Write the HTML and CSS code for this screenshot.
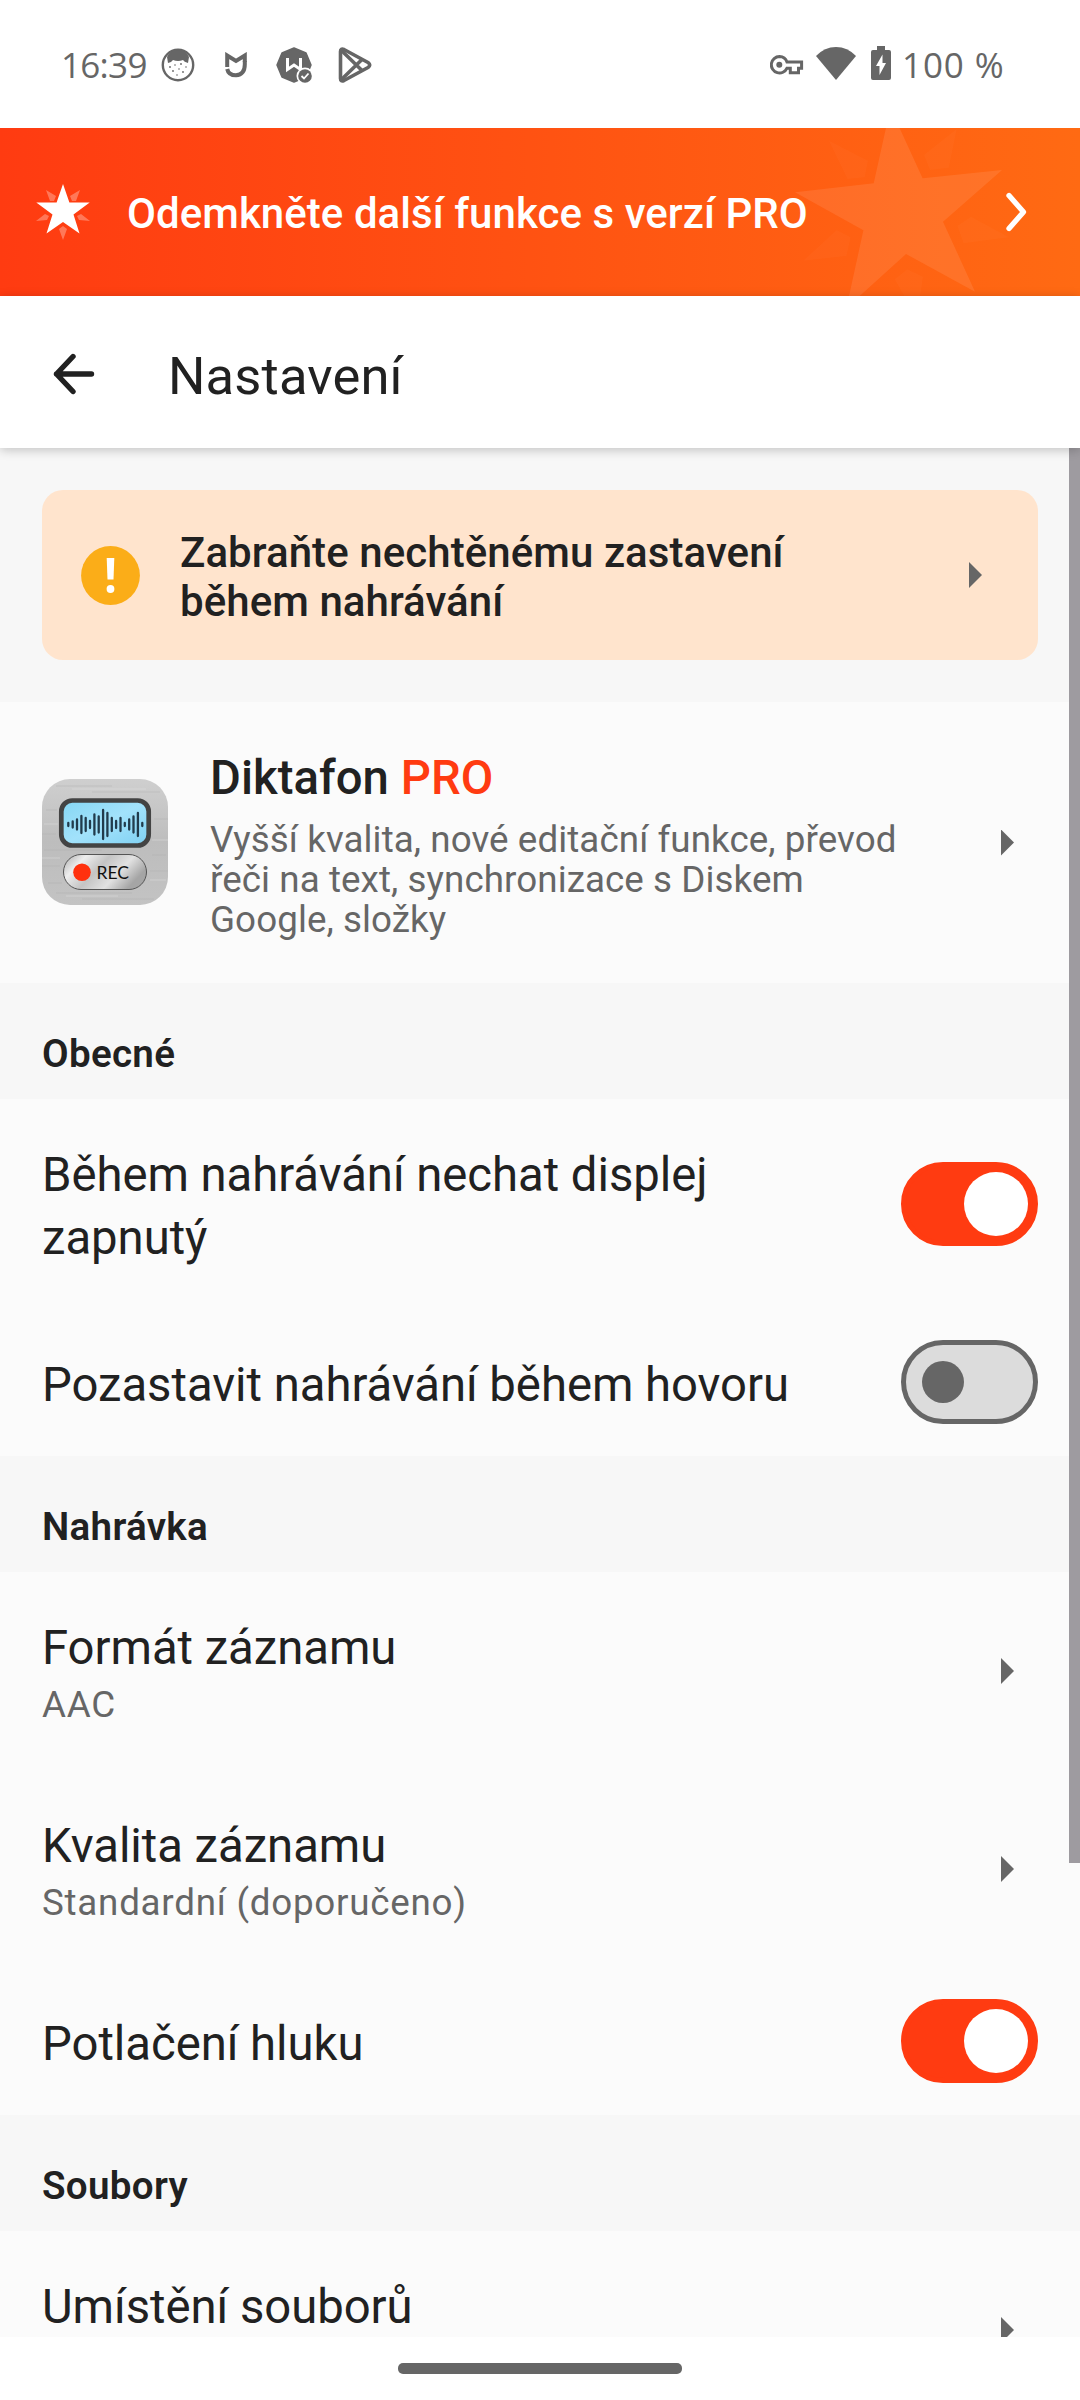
FILE: index.html
```html
<!DOCTYPE html>
<html lang="cs">
<head>
<meta charset="utf-8">
<title>Nastavení</title>
<link rel="stylesheet" href="styles.css">
</head>
<body>
<div class="screen">
  <header class="status">
    <span class="clock">16:39</span>
    <svg class="cat" width="34" height="34" viewBox="0 0 34 34"><circle cx="17" cy="17" r="15.2" fill="none" stroke="#666" stroke-width="2.4"/><path d="M6 9Q9 2 17 2T28 9L27 15Q23 14 22 12Q17 14 12 12Q10 15 7 15Z" fill="#666"/><g fill="#666"><circle cx="9" cy="19" r=".9"/><circle cx="14" cy="17" r=".8"/><circle cx="20" cy="16" r=".9"/><circle cx="25" cy="19" r=".8"/><circle cx="12" cy="23" r=".9"/><circle cx="18" cy="21" r=".8"/><circle cx="22" cy="24" r=".9"/><circle cx="16" cy="27" r=".8"/></g></svg>
    <svg class="mi" width="22" height="26" viewBox="0 0 22 26"><path d="M2.200 15V3.500L11 9L19.800 3.500V10" fill="none" stroke="#666" stroke-width="4"/><path d="M2.200 17Q3.500 23.300 11 23.300Q19.800 22.500 19.800 12.500V9" fill="none" stroke="#666" stroke-width="4"/></svg>
    <svg class="octagon" width="36" height="36" viewBox="0 0 36 36"><path d="M18 1L30 6L35 18L30 30L18 35L6 30L1 18L6 6Z" fill="#666" stroke="#666" stroke-width="1.500" stroke-linejoin="round"/><path d="M11.500 11V22.500L18 18L24.500 22.500V11" fill="none" stroke="#fff" stroke-width="3"/><circle cx="29" cy="29" r="8.500" fill="#fff"/><circle cx="29" cy="29" r="6.800" fill="#666"/><path d="M25.500 29L28 31.500L32.500 26.500" fill="none" stroke="#fff" stroke-width="1.800"/></svg>
    <svg class="play" width="34" height="36" viewBox="0 0 34 36"><g fill="none" stroke="#666" stroke-width="3.600" stroke-linejoin="round"><path d="M2.500 4.500Q2.500 1 6 2.500L30 15.500Q33.500 18 30 20.500L6 33.500Q2.500 35 2.500 31.500Z"/><path d="M4 4L24.500 24M4 32L24.500 12"/></g></svg>
    <svg class="key" width="34" height="20" viewBox="0 0 34 20"><path d="M9.500 1.600A8.200 8.200 0 1 0 17 13.200H20.300V17.800H28.500V13.200H31.600V7H17A8.200 8.200 0 0 0 9.500 1.600Z" fill="none" stroke="#666" stroke-width="3"/><circle cx="9.300" cy="9.800" r="3" fill="#666"/></svg>
    <svg class="wifi" width="40" height="33" viewBox="0 0 40 33"><path d="M0 9Q8.500 0 20 0T40 9L20 33Z" fill="#666"/></svg>
    <svg class="battery" width="20" height="34" viewBox="0 0 20 34"><path d="M6 0H14V4H18Q20 4 20 6V32Q20 34 18 34H2Q0 34 0 32V6Q0 4 2 4H6Z" fill="#666"/><path d="M11.500 8.500V17H15L8.500 29V20H5Z" fill="#fff"/></svg>
    <span class="percent">100 %</span>
  </header>

  <a class="promo">
    <svg class="promo-bg" width="240" height="168" viewBox="790 128 240 168"><path fill="#fff" fill-opacity=".09" d="M890.400 108L922.600 178.300L1002 170L943 221.700L975 291.700L906 254L846.400 308L863.400 230.300L795 192.300L873.700 183.300Z"/><path fill="#fff" fill-opacity=".025" d="M829 140.700L868 160.700L864.700 177.300L847.500 179ZM956.700 129L924 155L930 170L948.800 167.700ZM957.400 226L971 216.700L1009 237.300L963.600 243.300ZM803.400 260.700L836.800 230L850.600 237.300L846.500 256ZM894.700 279.300L907.400 269.300L923 276.700L917 318Z"/></svg>
    <svg class="promo-star" width="54" height="56" viewBox="0 0 54 56"><path fill="#fff" fill-opacity=".3" d="M10 6L20 12L18 17H14ZM44 6L34 12L36 17H40ZM0 37L9 30L13 32L11 36ZM54 37L45 30L41 32L43 36ZM27 56L23 45L27 42L31 45Z"/><path fill="#fff" d="M27 0L33.400 18.500H53.700L37.500 30.500L43.500 49.500L27 38L10.500 49.500L16.500 30.500L.3 18.500H20.600Z"/></svg>
    <span class="promo-text">Odemkněte další funkce s verzí PRO</span>
    <svg class="chevron" width="22" height="40" viewBox="0 0 22 40"><path d="M4 3.500L18.500 20L4 36.500" fill="none" stroke="#fff" stroke-width="5.300" stroke-linecap="round" stroke-linejoin="round"/></svg>
  </a>

  <div class="appbar">
    <svg width="42" height="42" viewBox="0 0 42 42"><path d="M38.500 21H3.500M20 3.500L3.500 21L20 38.500" fill="none" stroke="#212121" stroke-width="5.400" stroke-linecap="round" stroke-linejoin="round"/></svg>
    <h1>Nastavení</h1>
  </div>

  <main class="list">
    <div class="scrollbar"></div>
    <div class="card">
      <svg width="59" height="59" viewBox="0 0 59 59"><circle cx="29.500" cy="29.500" r="29.400" fill="#fbad18"/><path d="M25.700 12H33.300L32.500 33.500H26.500Z" fill="#fff"/><circle cx="29.500" cy="43" r="3.900" fill="#fff"/></svg>
      <p>Zabraňte nechtěnému zastavení<br>během nahrávání</p>
      <i class="arrow"></i>
    </div>

    <section class="group product">
      <svg class="app-icon" width="126" height="126" viewBox="0 0 126 126">
        <defs>
          <linearGradient id="metal" x2="0" y2="1"><stop offset="0" stop-color="#cfcfcf"/><stop offset=".5" stop-color="#bdbdbd"/><stop offset="1" stop-color="#c3c3c3"/></linearGradient>
          <linearGradient id="lcd" x2="1" y2="1"><stop offset="0" stop-color="#85d6f3"/><stop offset=".5" stop-color="#a2e2fb"/><stop offset="1" stop-color="#7fd0f2"/></linearGradient>
          <linearGradient id="key" x2="1" y2=".4"><stop offset="0" stop-color="#aaa"/><stop offset=".25" stop-color="#eee"/><stop offset=".5" stop-color="#c4c4c4"/><stop offset=".75" stop-color="#e2e2e2"/><stop offset="1" stop-color="#a5a5a5"/></linearGradient>
        </defs>
        <rect width="126" height="126" rx="28" fill="url(#metal)"/>
        <path d="M14 7H70M50 13H118M4 31H15M112 40H126M0 55H14M2 71H60M0 87H18M108 92H126M6 104H20M14 114H90M40 120H112M110 76H124" stroke="#aaa" stroke-opacity=".35"/>
        <path d="M30 10H104M2 45H16M110 61H126M0 79H18M108 101H124M24 117H76" stroke="#e2e2e2" stroke-opacity=".5"/>
        <rect x="19.300" y="21.500" width="87.400" height="45" rx="11" fill="url(#lcd)" stroke="#434343" stroke-width="4.700"/>
        <path d="M26.300 44v3M30.700 42.500v6M35 40.500v10M39.400 37v17M43.700 39v13M48 42v7M52.400 35.500v20M56.700 37.500v16M61.100 31v29M65.400 34v23M69.800 39v13M74.100 42v7M78.500 39v13M82.800 44v3M87.200 40.500v10M91.500 37.500v16M95.900 34v23M100.300 44v3" stroke="#213b4c" stroke-width="2.300" stroke-linecap="round"/>
        <rect x="21.500" y="75.500" width="83" height="35" rx="17.500" fill="url(#key)" stroke="#555"/>
        <circle cx="40" cy="93.300" r="8.800" fill="#ff310e"/>
        <text class="rec" x="54.500" y="99.700">REC</text>
      </svg>
      <div class="product-text">
        <h2>Diktafon <b>PRO</b></h2>
        <p>Vyšší kvalita, nové editační funkce, převod<br>řeči na text, synchronizace s Diskem<br>Google, složky</p>
      </div>
      <i class="arrow"></i>
    </section>

    <h3>Obecné</h3>
    <section class="group">
      <div class="row"><span class="label">Během nahrávání nechat displej<br>zapnutý</span><i class="switch on"></i></div>
      <div class="row"><span class="label">Pozastavit nahrávání během hovoru</span><i class="switch"></i></div>
    </section>

    <h3>Nahrávka</h3>
    <section class="group">
      <div class="row tall"><div><div class="label">Formát záznamu</div><div class="value">AAC</div></div><i class="arrow"></i></div>
      <div class="row tall"><div><div class="label">Kvalita záznamu</div><div class="value">Standardní (doporučeno)</div></div><i class="arrow"></i></div>
      <div class="row"><span class="label">Potlačení hluku</span><i class="switch on"></i></div>
    </section>

    <h3>Soubory</h3>
    <section class="group">
      <div class="row tall"><div><div class="label">Umístění souborů</div></div><i class="arrow"></i></div>
    </section>
  </main>

  <footer class="navbar"><div class="pill"></div></footer>
</div>
</body>
</html>
```
FILE: styles.css
```css
* { box-sizing: border-box; }
body, h1, h2, h3, p { margin: 0; }
body { background: #fff; color: #212121; font-family: Roboto, "Liberation Sans", sans-serif; }
svg { display: block; flex: none; }

.screen { width: 1080px; height: 2400px; display: flex; flex-direction: column; overflow: hidden; }

.status { height: 128px; flex: none; display: flex; align-items: center; padding: 2px 76px 0 61px; color: #666; font: 500 35px/1 "Open Sans", sans-serif; }
.clock { width: 100px; padding-bottom: 2px; letter-spacing: -.7px; }
.mi { margin-left: 30px; }
.octagon { margin-left: 29px; }
.play { margin-left: 26px; }
.key { margin-left: auto; }
.wifi { margin-left: 12px; margin-top: -4px; }
.battery { margin-left: 15px; margin-top: -4px; }
.percent { margin-left: 11px; width: 102px; padding-bottom: 2px; letter-spacing: .9px; white-space: nowrap; }

.promo { position: relative; height: 168px; flex: none; display: flex; align-items: center; padding: 0 53px 0 36px; background: linear-gradient(90deg, #ff3b11, #ff6a13); color: #fff; }
.promo-bg { position: absolute; left: 790px; top: 0; }
.promo-text { margin-left: 37px; padding-top: 3px; font-size: 42px; letter-spacing: .05px; font-weight: 500; white-space: nowrap; }
.chevron { margin-left: auto; }

.appbar { position: relative; z-index: 2; height: 152px; flex: none; display: flex; align-items: center; padding: 4px 53px 0; background: #fff; box-shadow: 0 2px 10px rgba(0, 0, 0, .22); }
.appbar h1 { margin: 4px 0 0 73px; font-size: 52.5px; letter-spacing: .15px; font-weight: 400; }

.list { position: relative; flex: 1; min-height: 0; overflow: hidden; background: #f7f7f7; }
.scrollbar { position: absolute; right: 0; top: 0; width: 11px; height: 1415px; background: #9e9ba0; }

.card { height: 170px; margin: 42px; padding: 0 56px 0 39px; display: flex; align-items: center; border-radius: 21px; background: #ffe4cd; }
.card p { margin-left: 40px; padding-top: 4px; font-size: 42px; letter-spacing: .07px; line-height: 49px; font-weight: 500; }
.arrow { margin-left: auto; width: 13px; height: 26px; background: #666; clip-path: polygon(0 0, 100% 50%, 0 100%); }

.group { background: #fbfbfb; }
.product { height: 281px; display: flex; align-items: center; padding: 0 66px 0 42px; }
.app-icon { margin-top: -2px; }
.product-text { margin-left: 42px; padding-top: 5px; }
.product-text h2 { font-size: 47.25px; letter-spacing: .05px; line-height: 56px; font-weight: 500; }
.product-text b { font-weight: 500; color: #ff3b11; }
.product-text p { margin-top: 14px; font-size: 36.75px; letter-spacing: .08px; line-height: 40px; color: #666; white-space: nowrap; }
.rec { font: 400 17.5px Lato, sans-serif; fill: #111; }

h3 { height: 116px; padding: 48px 42px 0; font-size: 38.6px; letter-spacing: .3px; line-height: 46px; font-weight: 600; }

.row { height: 147px; padding: 0 42px; display: flex; align-items: center; }
.row:first-child:not(.tall) { height: 210px; }
.label { padding-top: 5px; font-size: 47.25px; letter-spacing: -.03px; line-height: 63px; }
.switch { position: relative; margin: -1px 0 0 auto; width: 137px; height: 84px; border-radius: 42px; border: 5px solid #666; background: #dcdcdc; flex: none; }
.switch::after { content: ""; position: absolute; left: 16px; top: 16px; width: 42px; height: 42px; border-radius: 50%; background: #666; }
.switch.on { background: #ff3b11; border-color: #ff3b11; }
.switch.on::after { left: 58px; top: 5px; width: 64px; height: 64px; background: #fff; }
.tall { height: 198px; padding: 40px 66px 0 42px; align-items: flex-start; }
.tall .arrow { margin-top: 46px; }
.value { margin-top: 3px; font-size: 36.75px; letter-spacing: .75px; line-height: 43px; color: #666; }

.navbar { height: 63px; flex: none; background: #fff; padding-top: 26px; }
.pill { width: 284px; height: 11px; margin: 0 auto; border-radius: 5px; background: #666; }
```
